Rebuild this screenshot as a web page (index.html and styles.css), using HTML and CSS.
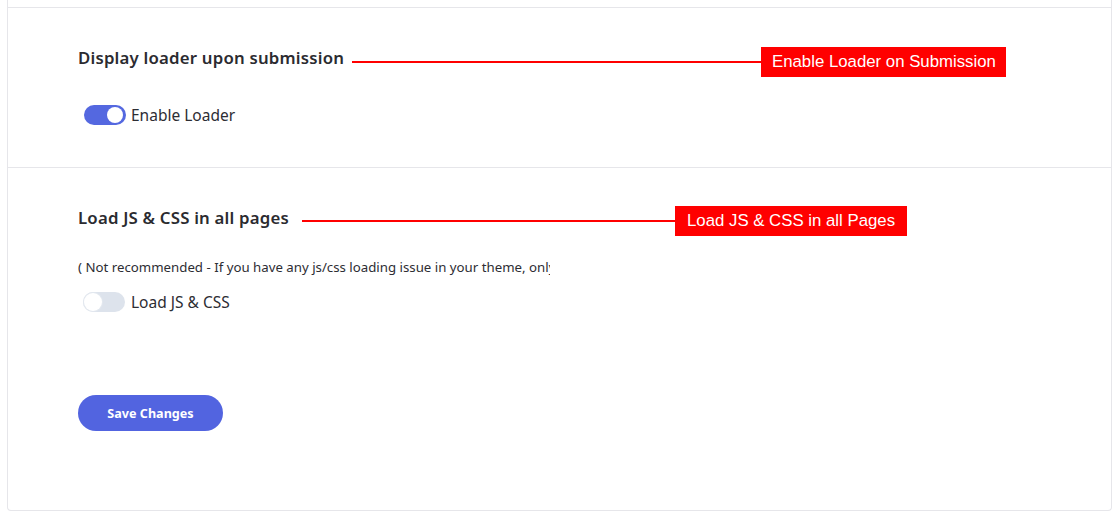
FILE: index.html
```html
<!DOCTYPE html>
<html>
<head>
<meta charset="utf-8">
<link rel="stylesheet" href="styles.css">
</head>
<body>
<div class="card">
  <div class="prev"></div>
  <section class="section s1">
    <h3 class="title">Display loader upon submission</h3>
    <label class="switch-row">
      <span class="switch on"><span class="knob"></span></span>
      <span class="switch-label">Enable Loader</span>
    </label>
    <div class="note n1">
      <span class="note-line"></span>
      <span class="note-box">Enable Loader on Submission</span>
    </div>
  </section>
  <section class="section s2">
    <h3 class="title">Load JS &amp; CSS in all pages</h3>
    <p class="hint">( Not recommended - If you have any js/css loading issue in your theme, only then enable this option )</p>
    <label class="switch-row">
      <span class="switch off"><span class="knob"></span></span>
      <span class="switch-label">Load JS &amp; CSS</span>
    </label>
    <button class="save">Save Changes</button>
    <div class="note n2">
      <span class="note-line"></span>
      <span class="note-box">Load JS &amp; CSS in all Pages</span>
    </div>
  </section>
</div>
</body>
</html>
```
FILE: styles.css
```css
html, body {
  margin: 0;
  padding: 0;
  background: #ffffff;
}
body {
  font-family: "Noto Sans", "Open Sans", sans-serif;
  color: #2d2d33;
  width: 1117px;
  height: 518px;
  overflow: hidden;
}
.card {
  margin-left: 7px;
  width: 1103px;
  border: 1px solid #e6e6ea;
  border-top: none;
  border-radius: 0 0 4px 4px;
  background: #fff;
}
.prev {
  height: 7px;
}
.section {
  position: relative;
  border-top: 1px solid #e6e6ea;
  padding-left: 70px;
}
.s1 {
  height: 160px;
  padding-top: 38px;
  box-sizing: border-box;
}
.s2 {
  height: 343px;
  padding-top: 38px;
  box-sizing: border-box;
}
.title {
  margin: 0;
  font-size: 16.8px;
  font-weight: 600;
  line-height: 24px;
  color: #2b2b30;
  letter-spacing: 0.2px;
}
.switch-row {
  display: flex;
  align-items: center;
  gap: 5px;
  margin-top: 33px;
  margin-left: 6px;
  height: 24px;
}
.switch {
  position: relative;
  width: 42px;
  height: 20px;
  border-radius: 10px;
  display: inline-block;
}
.switch.on {
  background: #5468e0;
}
.switch.off {
  background: #dde3ec;
  margin-left: -1px;
}
.knob {
  position: absolute;
  top: 2px;
  width: 16px;
  height: 16px;
  border-radius: 50%;
  background: #fff;
}
.switch.on .knob {
  right: 3px;
}
.switch.off .knob {
  left: 1px;
  top: 1px;
  width: 18px;
  height: 18px;
  box-shadow: 0 0 0 1px #e3e8ef;
}
.switch-label {
  font-size: 15.5px;
  color: #2d2d33;
}
.s2 .switch-label {
  margin-left: 1px;
}
.s2 .switch-row {
  margin-top: 14px;
}
.hint {
  margin: 28px 0 0;
  width: 472px;
  white-space: nowrap;
  overflow: hidden;
  font-size: 13.25px;
  line-height: 18px;
  color: #2d2d33;
}
.save {
  display: block;
  margin-top: 81px;
  width: 145px;
  height: 36px;
  border: none;
  border-radius: 18px;
  background: #5264e0;
  color: #fff;
  font-family: "Noto Sans", sans-serif;
  font-size: 12.6px;
  font-weight: 700;
  cursor: pointer;
}
.note {
  position: absolute;
  display: flex;
  align-items: center;
}
.n1 {
  left: 344px;
  top: 39px;
}
.n2 {
  left: 294px;
  top: 38px;
}
.note-line {
  height: 2px;
  background: #ff0000;
}
.n1 .note-line { width: 409px; }
.n2 .note-line { width: 373px; }
.note-box {
  background: #ff0000;
  color: #fff;
  font-family: "Liberation Sans", Arial, sans-serif;
  font-size: 16.8px;
  height: 30px;
  line-height: 30px;
  padding: 0 11px;
  white-space: nowrap;
}
.n1 .note-box { padding: 0 10px 0 11px; }
.n2 .note-box { padding: 0 12px 0 12px; }
```
